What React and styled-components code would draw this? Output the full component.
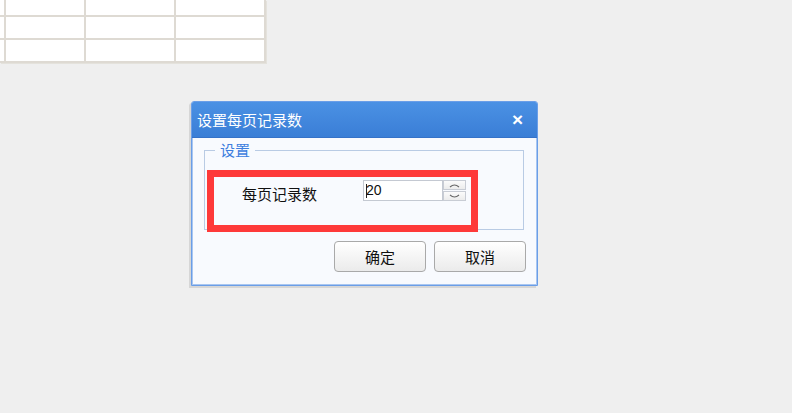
import React from "react";
import styled, { createGlobalStyle } from "styled-components";

const Global = createGlobalStyle`
  html, body { margin: 0; padding: 0; background: #efefef; }
  body { font-family: "Noto Sans CJK SC", "Liberation Sans", sans-serif; width: 792px; height: 413px; overflow: hidden; }
`;

const Page = styled.div`
  display: flex;
  flex-direction: column;
  align-items: flex-start;
`;

const Grid = styled.div`
  display: grid;
  grid-template-columns: 6px 80px 90px 90px;
  background: #fff;
  box-shadow: 1px 1px 0 #e4e2dc;
`;

const Cell = styled.div`
  height: ${(p) => p.$h}px;
  border-right: 2px solid #dedad3;
  border-bottom: 2px solid #dedad3;
  box-sizing: border-box;
`;

const Dialog = styled.div`
  position: relative;
  margin: 38px 0 0 191px;
  width: 347px;
  height: 185px;
  box-sizing: border-box;
  border: 1px solid #6a9ee8;
  border-radius: 3px 3px 0 0;
  background: #f8fafe;
  box-shadow: -2px 2px 0 #d6d6d6, 0 0 0 1px #a9c6f0 inset;
  display: flex;
  flex-direction: column;
`;

const TitleBar = styled.div`
  height: 35px;
  flex: none;
  background: linear-gradient(#4b91e4, #3a7ed6);
  border-radius: 2px 2px 0 0;
  border-bottom: 1px solid #3572c8;
  display: flex;
  align-items: center;
  justify-content: space-between;
  padding: 0 14px 0 5px;
  color: #fff;
  font-size: 15px;
`;

const Close = styled.span`
  font-family: "Liberation Sans", sans-serif;
  font-size: 19px;
  font-weight: bold;
  line-height: 1;
`;

const Body = styled.div`
  flex: 1;
  display: flex;
  flex-direction: column;
  padding: 4px 13px 0 12px;
`;

const Group = styled.fieldset`
  margin: 0;
  padding: 0 0 0 37px;
  height: 88px;
  box-sizing: border-box;
  border: 1px solid #b9cbe4;
  display: flex;
  align-items: flex-start;
`;

const Legend = styled.legend`
  margin-left: -27px;
  padding: 0 5px;
  color: #3d7ede;
  font-size: 15px;
  line-height: 16px;
`;

const Row = styled.div`
  display: flex;
  align-items: flex-start;
  margin-top: 22px;
`;

const Label = styled.span`
  width: 121px;
  margin-top: 4px;
  font-size: 15px;
  line-height: 20px;
  color: #111;
`;

const Input = styled.div`
  width: 80px;
  height: 21px;
  box-sizing: border-box;
  border: 1px solid #c4c9d2;
  background: #fff;
  font-family: "Liberation Sans", sans-serif;
  font-size: 14px;
  line-height: 19px;
  padding-left: 2px;
  color: #111;
  display: flex;
  align-items: center;
`;

const Caret = styled.span`
  width: 1px;
  height: 14px;
  background: #222;
  margin-right: -1px;
`;

const Spinner = styled.div`
  display: flex;
  flex-direction: column;
  gap: 1px;
  width: 23px;
  height: 21px;
`;

const SpinBtn = styled.div`
  flex: 1;
  border: 1px solid #c8ccd4;
  background: linear-gradient(#fbfbfb, #ececec);
  display: flex;
  align-items: center;
  justify-content: center;
`;

const Buttons = styled.div`
  display: flex;
  justify-content: flex-end;
  gap: 8px;
  margin: 11px -2px 0 0;
`;

const Button = styled.button`
  width: 92px;
  height: 31px;
  border: 1px solid #a9a9a9;
  border-radius: 4px;
  background: linear-gradient(#ffffff, #ebebeb);
  font-family: "Noto Sans CJK SC", sans-serif;
  font-size: 15px;
  color: #111;
  padding: 0;
`;

const Highlight = styled.div`
  position: absolute;
  left: 15px;
  top: 68px;
  width: 271px;
  height: 62px;
  box-sizing: border-box;
  border: 7px solid #fe3939;
  pointer-events: none;
`;

const Chevron = ({ up }) => (
  <svg width="11" height="5" viewBox="0 0 11 5">
    <path
      d={up ? "M1 4 Q5.5 0 10 4" : "M1 1 Q5.5 5 10 1"}
      stroke="#666"
      strokeWidth="1.1"
      fill="none"
    />
  </svg>
);

const rows = [17, 23, 23];

export default function App() {
  return (
    <Page>
      <Global />
      <Grid>
        {rows.map((h, r) =>
          [0, 1, 2, 3].map((c) => <Cell key={r + "-" + c} $h={h} />)
        )}
      </Grid>
      <Dialog>
        <TitleBar>
          <span>设置每页记录数</span>
          <Close>×</Close>
        </TitleBar>
        <Body>
          <Group>
            <Legend>设置</Legend>
            <Row>
              <Label>每页记录数</Label>
              <Input>
                <Caret />
                20
              </Input>
              <Spinner>
                <SpinBtn>
                  <Chevron up />
                </SpinBtn>
                <SpinBtn>
                  <Chevron />
                </SpinBtn>
              </Spinner>
            </Row>
          </Group>
          <Buttons>
            <Button>确定</Button>
            <Button>取消</Button>
          </Buttons>
        </Body>
        <Highlight />
      </Dialog>
    </Page>
  );
}
